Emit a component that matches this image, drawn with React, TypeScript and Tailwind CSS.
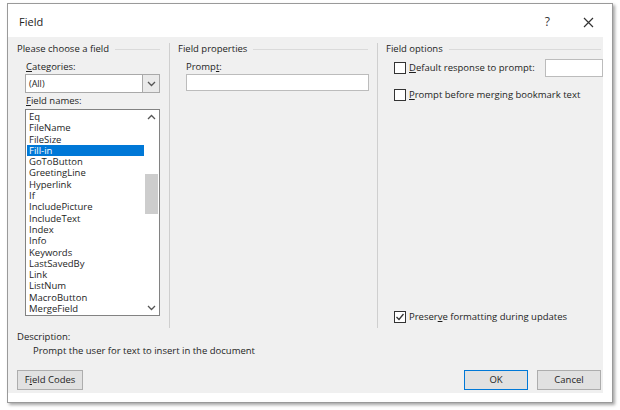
import React from "react";

const font = { fontFamily: '"Open Sans", "Noto Sans", sans-serif' };

function Chevron({ up }: { up?: boolean }) {
  return (
    <svg width="9" height="6" viewBox="0 0 9 6">
      <polyline
        points={up ? "1,5 4.5,1.5 8,5" : "1,1 4.5,4.5 8,1"}
        fill="none"
        stroke="#555"
        strokeWidth="1.3"
      />
    </svg>
  );
}

function Check({ checked }: { checked?: boolean }) {
  return (
    <div className="w-[12px] h-[12px] border border-[#333] bg-white flex items-center justify-center shrink-0">
      {checked && (
        <svg width="10" height="10" viewBox="0 0 10 10">
          <polyline points="1.5,5 4,7.5 8.5,2" fill="none" stroke="#333" strokeWidth="1.3" />
        </svg>
      )}
    </div>
  );
}

function GroupHeader({ title, endGap }: { title: string; endGap: string }) {
  return (
    <div className={`flex items-center gap-[6px] h-[12px] ${endGap}`}>
      <span className="whitespace-nowrap">{title}</span>
      <div className="flex-1 h-px bg-[#dadada]" />
    </div>
  );
}

const items = [
  "Eq",
  "FileName",
  "FileSize",
  "Fill-in",
  "GoToButton",
  "GreetingLine",
  "Hyperlink",
  "If",
  "IncludePicture",
  "IncludeText",
  "Index",
  "Info",
  "Keywords",
  "LastSavedBy",
  "Link",
  "ListNum",
  "MacroButton",
  "MergeField",
];

export default function App() {
  return (
    <div
      className="w-[620px] h-[410px] bg-white pt-[3px] pl-[7px] text-[9.5px] leading-[12px] text-[#1e1e1e]"
      style={font}
    >
      <div className="w-[606px] h-[400px] bg-white border border-[#9a9a9a] shadow-[2px_2px_3px_rgba(0,0,0,0.35)] flex flex-col">
        {/* title bar */}
        <div className="h-[33px] pt-[3px] flex items-center pl-[11px] pr-[18px] shrink-0">
          <span className="text-[11px] text-[#222]">Field</span>
          <div className="flex-1" />
          <span className="text-[12px] text-[#333] mr-[33px]">?</span>
          <svg width="11" height="11" viewBox="0 0 11 11">
            <path d="M1 1 L10 10 M10 1 L1 10" stroke="#333" strokeWidth="1.2" />
          </svg>
        </div>
        {/* body */}
        <div className="bg-[#f0f0f0] mr-[9px] mb-[9px] flex-1 flex flex-col">
          <div className="flex pt-[6px] h-[291px]">
            {/* column 1 */}
            <div className="w-[161px] pl-[9px] flex flex-col">
              <GroupHeader title="Please choose a field" endGap="mr-[9px]" />
              <div className="pl-[9px] mt-[6px] h-[12px]">
                <u>C</u>ategories:
              </div>
              <div className="ml-[8px] mt-[1px] w-[135px] h-[19px] bg-white border border-[#a9a9a9] flex items-center">
                <span className="flex-1 pl-[3px] text-[9px]">(All)</span>
                <div className="w-[17px] h-full border-l border-[#a9a9a9] bg-[#eaeaea] flex items-center justify-center">
                  <Chevron />
                </div>
              </div>
              <div className="pl-[9px] mt-[2px] h-[12px]">
                <u>F</u>ield names:
              </div>
              <div className="ml-[8px] mt-[2px] w-[135px] h-[207px] bg-white border border-[#828282] flex">
                <div className="flex-1 pt-[1px] pl-[1px]">
                  {items.map((it) => (
                    <div
                      key={it}
                      className={`h-[11.3px] leading-[11.3px] pl-[2px] ${
                        it === "Fill-in" ? "bg-[#0078d7] text-white" : ""
                      }`}
                    >
                      {it}
                    </div>
                  ))}
                </div>
                <div className="w-[15px] flex flex-col items-center">
                  <div className="h-[14px] flex items-center justify-center">
                    <Chevron up />
                  </div>
                  <div className="w-[13px] h-[40px] bg-[#cdcdcd] mt-[50px]" />
                  <div className="flex-1" />
                  <div className="h-[14px] flex items-center justify-center">
                    <Chevron />
                  </div>
                </div>
              </div>
            </div>
            <div className="w-px bg-[#cfcfcf]" />
            {/* column 2 */}
            <div className="w-[207px] pl-[8px] flex flex-col">
              <GroupHeader title="Field properties" endGap="mr-[9px]" />
              <div className="pl-[8px] mt-[6px] h-[12px]">
                Promp<u>t</u>:
              </div>
              <div className="ml-[8px] mt-[1px] w-[183px] h-[17px] bg-white border border-[#bcbcbc]" />
            </div>
            <div className="w-px bg-[#cfcfcf]" />
            {/* column 3 */}
            <div className="flex-1 pl-[8px] flex flex-col">
              <GroupHeader title="Field options" endGap="mr-[2px]" />
              <div className="flex items-center mt-[4px] pl-[8px] h-[18px]">
                <Check />
                <span className="ml-[3px]">
                  <u>D</u>efault response to prompt:
                </span>
                <div className="flex-1" />
                <div className="w-[58px] h-[18px] bg-white border border-[#bcbcbc]" />
              </div>
              <div className="flex items-center mt-[12px] pl-[8px] h-[12px]">
                <Check />
                <span className="ml-[3px]">
                  <u>P</u>rompt before merging bookmark text
                </span>
              </div>
              <div className="flex-1" />
              <div className="flex items-center pl-[8px] mb-[5px] h-[12px]">
                <Check checked />
                <span className="ml-[3px]">
                  Preser<u>v</u>e formatting during updates
                </span>
              </div>
            </div>
          </div>
          <div className="pl-[9px] mt-[3px] h-[12px]">Description:</div>
          <div className="pl-[25px] mt-[2px] h-[12px]">Prompt the user for text to insert in the document</div>
          <div className="flex mt-[13px] pl-[9px] pr-[2px]">
            <div className="w-[66px] h-[20px] bg-[#e1e1e1] border border-[#adadad] flex items-center justify-center">
              F<u>i</u>eld Codes
            </div>
            <div className="flex-1" />
            <div className="w-[64px] h-[20px] bg-[#e1e1e1] border border-[#0078d7] flex items-center justify-center">
              OK
            </div>
            <div className="w-[64px] h-[20px] bg-[#e1e1e1] border border-[#adadad] flex items-center justify-center ml-[9px]">
              Cancel
            </div>
          </div>
        </div>
      </div>
    </div>
  );
}
